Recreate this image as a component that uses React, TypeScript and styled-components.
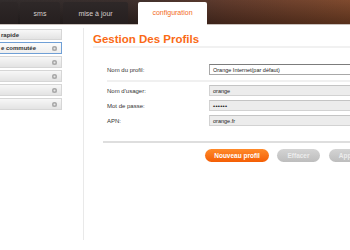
import React from "react";
import styled, { createGlobalStyle } from "styled-components";

const Global = createGlobalStyle`
  html, body { margin: 0; padding: 0; background: #fff; overflow: hidden; }
  body { font-family: "Liberation Sans", Arial, sans-serif; }
`;

const Page = styled.div`
  width: 350px;
  height: 250px;
  overflow: hidden;
  background: #fff;
`;

const Header = styled.div`
  height: 24px;
  border-bottom: 1px solid #c9c1bc;
  background:
    linear-gradient(to bottom, rgba(255,255,255,0.04), rgba(0,0,0,0.28)),
    linear-gradient(to right, #2a2424 0%, #332725 35%, #5a3324 65%, #7a4326 100%);
  display: flex;
  align-items: flex-end;
`;

const Tab = styled.div<{ $w: number; $ml: number; $active?: boolean }>`
  width: ${(p) => p.$w}px;
  margin-left: ${(p) => p.$ml}px;
  height: ${(p) => (p.$active ? 23 : 22)}px;
  margin-bottom: ${(p) => (p.$active ? -1 : 0)}px;
  border-radius: 2px 2px 0 0;
  background: ${(p) =>
    p.$active ? "#ffffff" : "linear-gradient(to bottom, #2e2828, #261f1f)"};
  color: ${(p) => (p.$active ? "#f26a1b" : "#d6cfcc")};
  font-size: 7px;
  display: flex;
  align-items: center;
  justify-content: center;
  padding-bottom: ${(p) => (p.$active ? 2 : 0)}px;
  box-sizing: border-box;
  white-space: nowrap;
`;

const Main = styled.div`
  display: grid;
  grid-template-columns: 83px 1fr;
`;

const Side = styled.div`
  padding-top: 4px;
  display: flex;
  flex-direction: column;
  gap: 2px;
`;

const SideItem = styled.div<{ $sel?: boolean; $h: number }>`
  width: 62px;
  height: ${(p) => p.$h}px;
  box-sizing: border-box;
  border: 1px solid ${(p) => (p.$sel ? "#6f9fd6" : "#d6d6d6")};
  border-left: none;
  background: ${(p) =>
    p.$sel ? "linear-gradient(#fbfbfb, #eeeeee)" : "linear-gradient(#f7f7f7, #e3e3e3)"};
  display: flex;
  align-items: center;
  justify-content: space-between;
  padding: 0 4px 0 1px;
  font-size: 6px;
  font-weight: bold;
  color: #333;
  white-space: nowrap;
`;

const Dot = styled.span`
  width: 5px;
  height: 5px;
  border-radius: 50%;
  background: #a9a9a9;
  box-shadow: inset 0 0 0 1.5px #a9a9a9, inset 0 0 0 3px #e6e6e6;
`;

const Panel = styled.div`
  margin-top: 3px;
  height: 212px;
  border-left: 1px solid #e9e9e9;
  padding-top: 4px;
  box-sizing: border-box;
`;

const Title = styled.h1`
  margin: 0 0 0 9px;
  font-size: 11.5px;
  line-height: 14px;
  font-weight: bold;
  color: #fa6a16;
  border-bottom: 2px solid #f1f1f1;
`;

const Form = styled.div`
  margin: 16px 0 0 23px;
  display: flex;
  flex-direction: column;
`;

const Row = styled.div<{ $mt: number }>`
  display: grid;
  grid-template-columns: 102px 200px;
  align-items: center;
  margin-top: ${(p) => p.$mt}px;
`;

const Label = styled.span`
  font-size: 6px;
  color: #333;
`;

const Input = styled.div<{ $white?: boolean; $pw?: boolean }>`
  height: 11px;
  box-sizing: border-box;
  border: 1px solid ${(p) => (p.$white ? "#a8a8a8" : "#d2d2d2")};
  border-top-color: ${(p) => (p.$white ? "#7c7c7c" : "#c4c4c4")};
  background: ${(p) => (p.$white ? "#ffffff" : "#ececec")};
  font-size: ${(p) => (p.$pw ? "6px" : "5.5px")};
  font-weight: ${(p) => (p.$pw ? "bold" : "normal")};
  letter-spacing: ${(p) => (p.$pw ? "0.3px" : "0")};
  color: #222;
  display: flex;
  align-items: center;
  padding-left: 3px;
  white-space: nowrap;
`;

const Sep = styled.div`
  margin-top: 5px;
  height: 2px;
  background: #f0f0f0;
`;

const BottomSep = styled.div`
  margin: 15px 0 0 19px;
  height: 2px;
  background: #dedede;
`;

const Buttons = styled.div`
  display: flex;
  margin: 6px 0 0 121px;
  gap: 8px;
`;

const Btn = styled.div<{ $w: number; $primary?: boolean }>`
  flex: none;
  width: ${(p) => p.$w}px;
  height: 13px;
  border-radius: 7px;
  background: ${(p) =>
    p.$primary
      ? "linear-gradient(#ff8a2a, #f45e05)"
      : "linear-gradient(#d4d4d4, #bdbdbd)"};
  color: ${(p) => (p.$primary ? "#fff" : "#ececec")};
  font-size: 6.5px;
  font-weight: bold;
  display: flex;
  align-items: center;
  justify-content: center;
  white-space: nowrap;
  overflow: hidden;
`;

export default function App() {
  return (
    <Page>
      <Global />
      <Header>
        <Tab $w={18} $ml={0} />
        <Tab $w={40} $ml={2}>sms</Tab>
        <Tab $w={65} $ml={3}>mise à jour</Tab>
        <Tab $w={69} $ml={10} $active>configuration</Tab>
      </Header>
      <Main>
        <Side>
          <SideItem $h={11}>rapide</SideItem>
          <SideItem $h={12} $sel>e commutée<Dot /></SideItem>
          <SideItem $h={12}><span /><Dot /></SideItem>
          <SideItem $h={12}><span /><Dot /></SideItem>
          <SideItem $h={12}><span /><Dot /></SideItem>
          <SideItem $h={12}><span /><Dot /></SideItem>
        </Side>
        <Panel>
          <Title>Gestion Des Profils</Title>
          <Form>
            <Row $mt={0}>
              <Label>Nom du profil:</Label>
              <Input $white>Orange Internet(par défaut)</Input>
            </Row>
            <Sep />
            <Row $mt={3}>
              <Label>Nom d'usager:</Label>
              <Input>orange</Input>
            </Row>
            <Row $mt={4}>
              <Label>Mot de passe:</Label>
              <Input $pw>••••••</Input>
            </Row>
            <Row $mt={4}>
              <Label>APN:</Label>
              <Input>orange.fr</Input>
            </Row>
          </Form>
          <BottomSep />
          <Buttons>
            <Btn $w={64} $primary>Nouveau profil</Btn>
            <Btn $w={43}>Effacer</Btn>
            <Btn $w={50} style={{ marginLeft: 1 }}>Appliquer</Btn>
          </Buttons>
        </Panel>
      </Main>
    </Page>
  );
}
